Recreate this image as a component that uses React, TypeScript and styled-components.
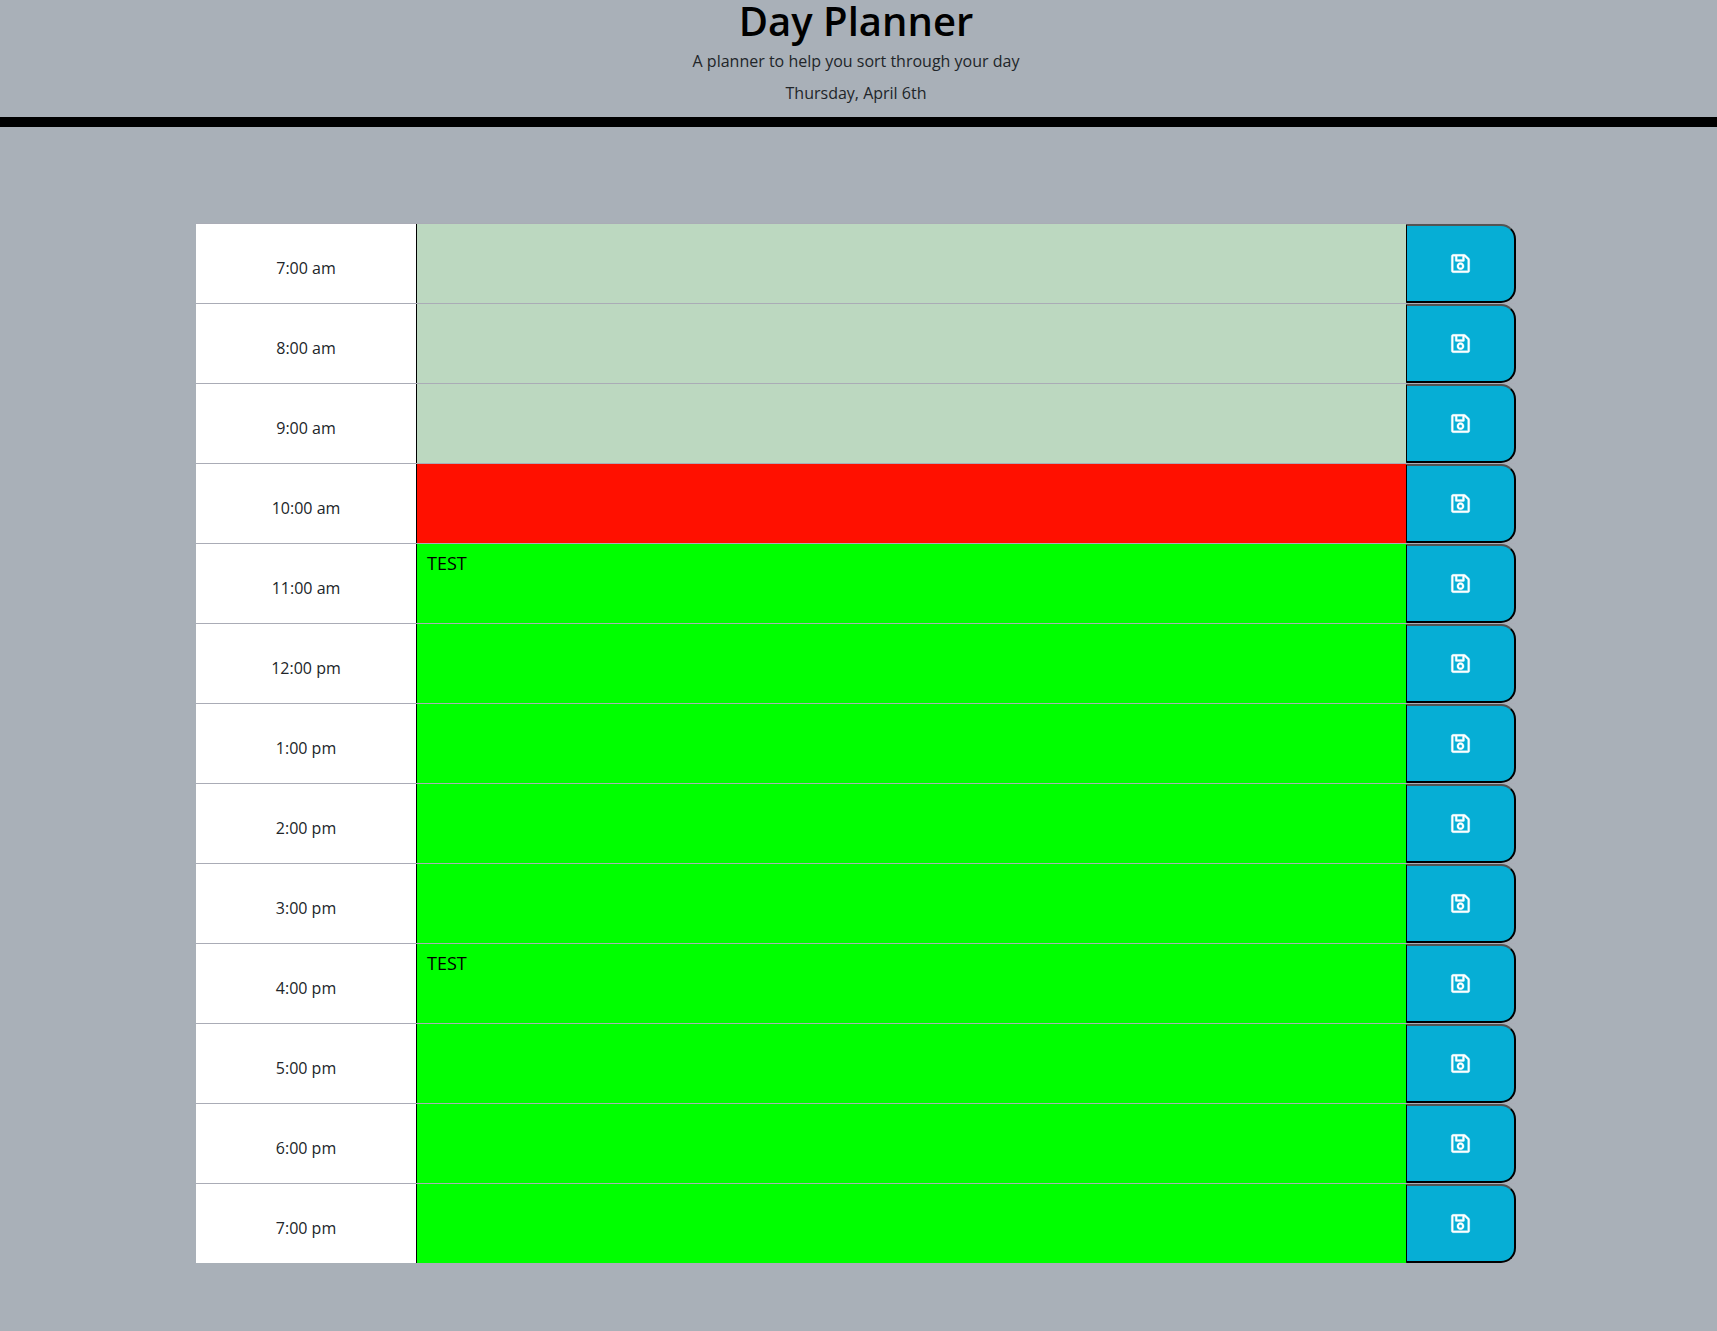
import React from "react";
import styled, { createGlobalStyle } from "styled-components";
import { FaRegSave } from "react-icons/fa";

const GlobalStyle = createGlobalStyle`
  * {
    box-sizing: border-box;
  }

  html,
  body {
    margin: 0;
    min-height: 100%;
    overflow: hidden;
    background-color: #a9b0b8;
    color: #212529;
    font-family: "Open Sans", sans-serif;
    font-size: 16px;
    line-height: 24px;
  }
`;

const Page = styled.div`
  min-height: 100vh;
  background-color: #a9b0b8;
`;

const Header = styled.header`
  height: 127px;
  padding-right: 5px;
  border-bottom: 10px solid #000;
  text-align: center;
`;

const Title = styled.h1`
  margin: 0 0 7px;
  color: #000;
  font-size: 40px;
  font-weight: 600;
  line-height: 42px;
`;

const Lead = styled.p`
  margin: 0 0 8px;
`;

const Main = styled.main`
  width: 1320px;
  margin: 96px 0 0 196px;
`;

const Row = styled.div`
  display: grid;
  grid-template-columns: 220px 1fr 110px;
  height: 80px;
  border-top: 1px solid #aaacb6;
`;

const Hour = styled.div`
  padding-top: 32px;
  background-color: #fff;
  text-align: center;
`;

const Task = styled.textarea<{ $period: "past" | "present" | "future" }>`
  display: block;
  width: 100%;
  height: 100%;
  padding: 7px 10px;
  border: 0;
  border-left: 1px solid #000;
  border-radius: 0;
  outline: none;
  resize: none;
  color: #000;
  font: inherit;
  font-size: 18px;
  background-color: ${({ $period }) =>
    $period === "past"
      ? "#bcd8c0"
      : $period === "present"
        ? "#ff1000"
        : "#00ff00"};
`;

const SaveButton = styled.button`
  display: flex;
  align-items: center;
  justify-content: center;
  padding: 0;
  border: 2px outset #000;
  border-left: 1px solid #000;
  border-radius: 0 15px 15px 0;
  background-color: #06aed5;
  color: #fff;
  cursor: pointer;
`;

const SaveIcon = styled(FaRegSave)`
  stroke: currentColor;
  stroke-width: 8px;
`;

const hours = [
  { label: "7:00 am", period: "past" },
  { label: "8:00 am", period: "past" },
  { label: "9:00 am", period: "past" },
  { label: "10:00 am", period: "present" },
  { label: "11:00 am", period: "future", text: "TEST" },
  { label: "12:00 pm", period: "future" },
  { label: "1:00 pm", period: "future" },
  { label: "2:00 pm", period: "future" },
  { label: "3:00 pm", period: "future" },
  { label: "4:00 pm", period: "future", text: "TEST" },
  { label: "5:00 pm", period: "future" },
  { label: "6:00 pm", period: "future" },
  { label: "7:00 pm", period: "future" },
] as const;

const App: React.FC = () => {
  return (
    <Page>
      <GlobalStyle />
      <Header>
        <Title>Day Planner</Title>
        <Lead>A planner to help you sort through your day</Lead>
        <Lead>Thursday, April 6th</Lead>
      </Header>
      <Main>
        {hours.map((hour) => (
          <Row key={hour.label}>
            <Hour>{hour.label}</Hour>
            <Task
              $period={hour.period}
              defaultValue={"text" in hour ? hour.text : ""}
            />
            <SaveButton aria-label={`Save ${hour.label}`}>
              <SaveIcon size={21} />
            </SaveButton>
          </Row>
        ))}
      </Main>
    </Page>
  );
};

export default App;
